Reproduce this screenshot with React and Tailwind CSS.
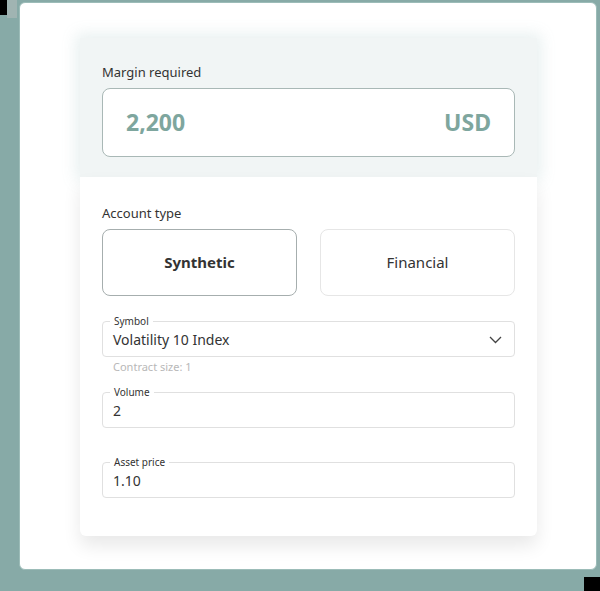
import React from 'react';

const font = { fontFamily: '"Noto Sans", "Open Sans", sans-serif' };

function Field({ label, value, chevron }) {
	return (
		<div className="relative h-[36px] border border-[#e0e0e0] rounded-[4px] flex items-center pl-[10px] pr-[12px]">
			<span className="absolute left-[7px] -top-[8px] bg-white px-[4px] text-[10px] leading-[14px] text-[#333]">{label}</span>
			<span className="flex-1 text-[14px] text-[#333] pt-[1px]">{value}</span>
			{chevron && (
				<svg width="13" height="8" viewBox="0 0 13 8" fill="none" className="mt-[1px]">
					<path d="M1 1l5.5 5.5L12 1" stroke="#444" strokeWidth="1.3" />
				</svg>
			)}
		</div>
	);
}

export default function App() {
	return (
		<div className="relative w-[600px] h-[591px] bg-[#87aaa7] overflow-hidden" style={font}>
			<div className="absolute left-0 top-0 w-[7px] h-[15px] bg-black" />
			<div className="absolute right-0 bottom-0 w-[16px] h-[14px] bg-black" />
			<div className="absolute left-[7px] top-0 w-[10px] h-[18px] bg-[#a0b4b2]" />

			<div className="ml-[19px] mt-[2px] w-[578px] h-[568px] bg-white rounded-[6px] border border-[#9cbcb8] pt-[35px] pl-[60px]">
				<div className="w-[457px]">
					<div className="bg-[#f1f5f5] px-[22px] pt-[25px] pb-[20px] shadow-[0_0_14px_4px_rgba(230,238,238,0.9)]">
						<div className="text-[13px] text-[#333] leading-[18px]">Margin required</div>
						<div className="mt-[7px] h-[69px] bg-white border border-[#a9b8b6] rounded-[8px] flex items-center justify-between px-[23px]">
							<span className="text-[23px] font-bold text-[#7ea69e]">2,200</span>
							<span className="text-[23px] font-bold text-[#7ea69e]">USD</span>
						</div>
					</div>
					<div className="bg-white px-[22px] pt-[27px] pb-[38px] rounded-b-[6px] shadow-[0_10px_18px_rgba(0,0,0,0.09)]">
						<div className="text-[13px] text-[#333] leading-[18px]">Account type</div>
						<div className="mt-[7px] grid grid-cols-2 gap-[23px]">
							<div className="h-[67px] border border-[#a6aeae] rounded-[8px] flex items-center justify-center text-[15px] font-bold text-[#333]">Synthetic</div>
							<div className="h-[67px] border border-[#e6e6e6] rounded-[8px] flex items-center justify-center text-[15px] text-[#333]">Financial</div>
						</div>
						<div className="mt-[25px]">
							<Field label="Symbol" value="Volatility 10 Index" chevron />
						</div>
						<div className="pl-[11px] mt-[2px] text-[11px] leading-[16px] text-[#b8b8b8]">Contract size: 1</div>
						<div className="mt-[17px]">
							<Field label="Volume" value="2" />
						</div>
						<div className="mt-[34px]">
							<Field label="Asset price" value="1.10" />
						</div>
					</div>
				</div>
			</div>
		</div>
	);
}
